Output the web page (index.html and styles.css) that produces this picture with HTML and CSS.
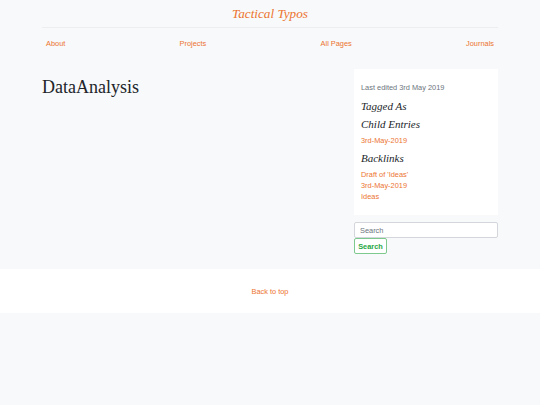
FILE: index.html
```html
<!DOCTYPE html>
<html>
<head>
<meta charset="utf-8">
<link rel="stylesheet" href="styles.css">
</head>
<body>
<div class="page">
  <header class="header">
    <a class="brand" href="#">Tactical Typos</a>
  </header>
  <nav class="nav">
    <a href="#">About</a>
    <a href="#">Projects</a>
    <a href="#">All Pages</a>
    <a href="#">Journals</a>
  </nav>
  <div class="content">
    <main class="main">
      <h1 class="title">DataAnalysis</h1>
    </main>
    <aside class="side">
      <div class="card">
        <p class="meta">Last edited 3rd May 2019</p>
        <h3 class="sub">Tagged As</h3>
        <h3 class="sub">Child Entries</h3>
        <ul class="links">
          <li><a href="#">3rd-May-2019</a></li>
        </ul>
        <h3 class="sub">Backlinks</h3>
        <ul class="links">
          <li><a href="#">Draft of 'Ideas'</a></li>
          <li><a href="#">3rd-May-2019</a></li>
          <li><a href="#">Ideas</a></li>
        </ul>
      </div>
      <form class="search">
        <input class="search-input" type="text" placeholder="Search">
        <button class="search-btn" type="button">Search</button>
      </form>
    </aside>
  </div>
</div>
<footer class="footer">
  <a href="#">Back to top</a>
</footer>
</body>
</html>
```
FILE: styles.css
```css
html, body {
  margin: 0;
  padding: 0;
  background: #f8f9fa;
  font-family: "Liberation Sans", Arial, sans-serif;
  color: #212529;
}
a {
  color: #ec7430;
  text-decoration: none;
}
.page {
  width: 456px;
  margin: 0 auto;
}
.header {
  box-sizing: border-box;
  text-align: center;
  padding-top: 5px;
  height: 28px;
  line-height: 16px;
  border-bottom: 1px solid #eceef0;
}
.brand {
  font-family: "Liberation Serif", "DejaVu Serif", serif;
  font-style: italic;
  font-size: 13.2px;
}
.nav {
  box-sizing: border-box;
  display: flex;
  justify-content: space-between;
  padding: 11px 4px 0;
  font-size: 7.4px;
  line-height: 9px;
  height: 41px;
}
.content {
  display: flex;
  justify-content: space-between;
  align-items: flex-start;
}
.title {
  margin: 8px 0 0;
  font-family: "Liberation Serif", "DejaVu Serif", serif;
  font-weight: normal;
  font-size: 18px;
  line-height: 20px;
  color: #212529;
}
.side {
  width: 144px;
}
.card {
  background: #fff;
  padding: 14px 7px 13px;
}
.meta {
  margin: 0 0 6px;
  font-size: 7.4px;
  line-height: 10px;
  color: #6c757d;
}
.sub {
  margin: 0 0 4px;
  font-family: "Liberation Serif", "DejaVu Serif", serif;
  font-style: italic;
  font-weight: normal;
  font-size: 11px;
  line-height: 14px;
  color: #212529;
}
.links {
  list-style: none;
  margin: 0 0 5px;
  padding: 0;
  font-size: 7.4px;
  line-height: 11px;
}
.links:last-child {
  margin-bottom: 0;
}
.search {
  margin: 7px 0 0;
}
.search-input {
  display: block;
  box-sizing: border-box;
  width: 144px;
  height: 16px;
  margin: 0;
  padding: 0 5px;
  border: 1px solid #d3d7db;
  border-radius: 2px;
  background: #fff;
  font-family: "Liberation Sans", Arial, sans-serif;
  font-size: 7.4px;
}
.search-input::placeholder {
  color: #6c757d;
}
.search-btn {
  display: block;
  box-sizing: border-box;
  height: 16px;
  width: 33px;
  margin: 0;
  padding: 0;
  border: 1px solid #7dc98e;
  border-radius: 2px;
  background: #fff;
  color: #28a745;
  font-family: "Liberation Sans", Arial, sans-serif;
  font-weight: bold;
  font-size: 7.4px;
}
.footer {
  margin-top: 15px;
  background: #fff;
  height: 44px;
  display: flex;
  align-items: center;
  justify-content: center;
  font-size: 7.4px;
}
```
